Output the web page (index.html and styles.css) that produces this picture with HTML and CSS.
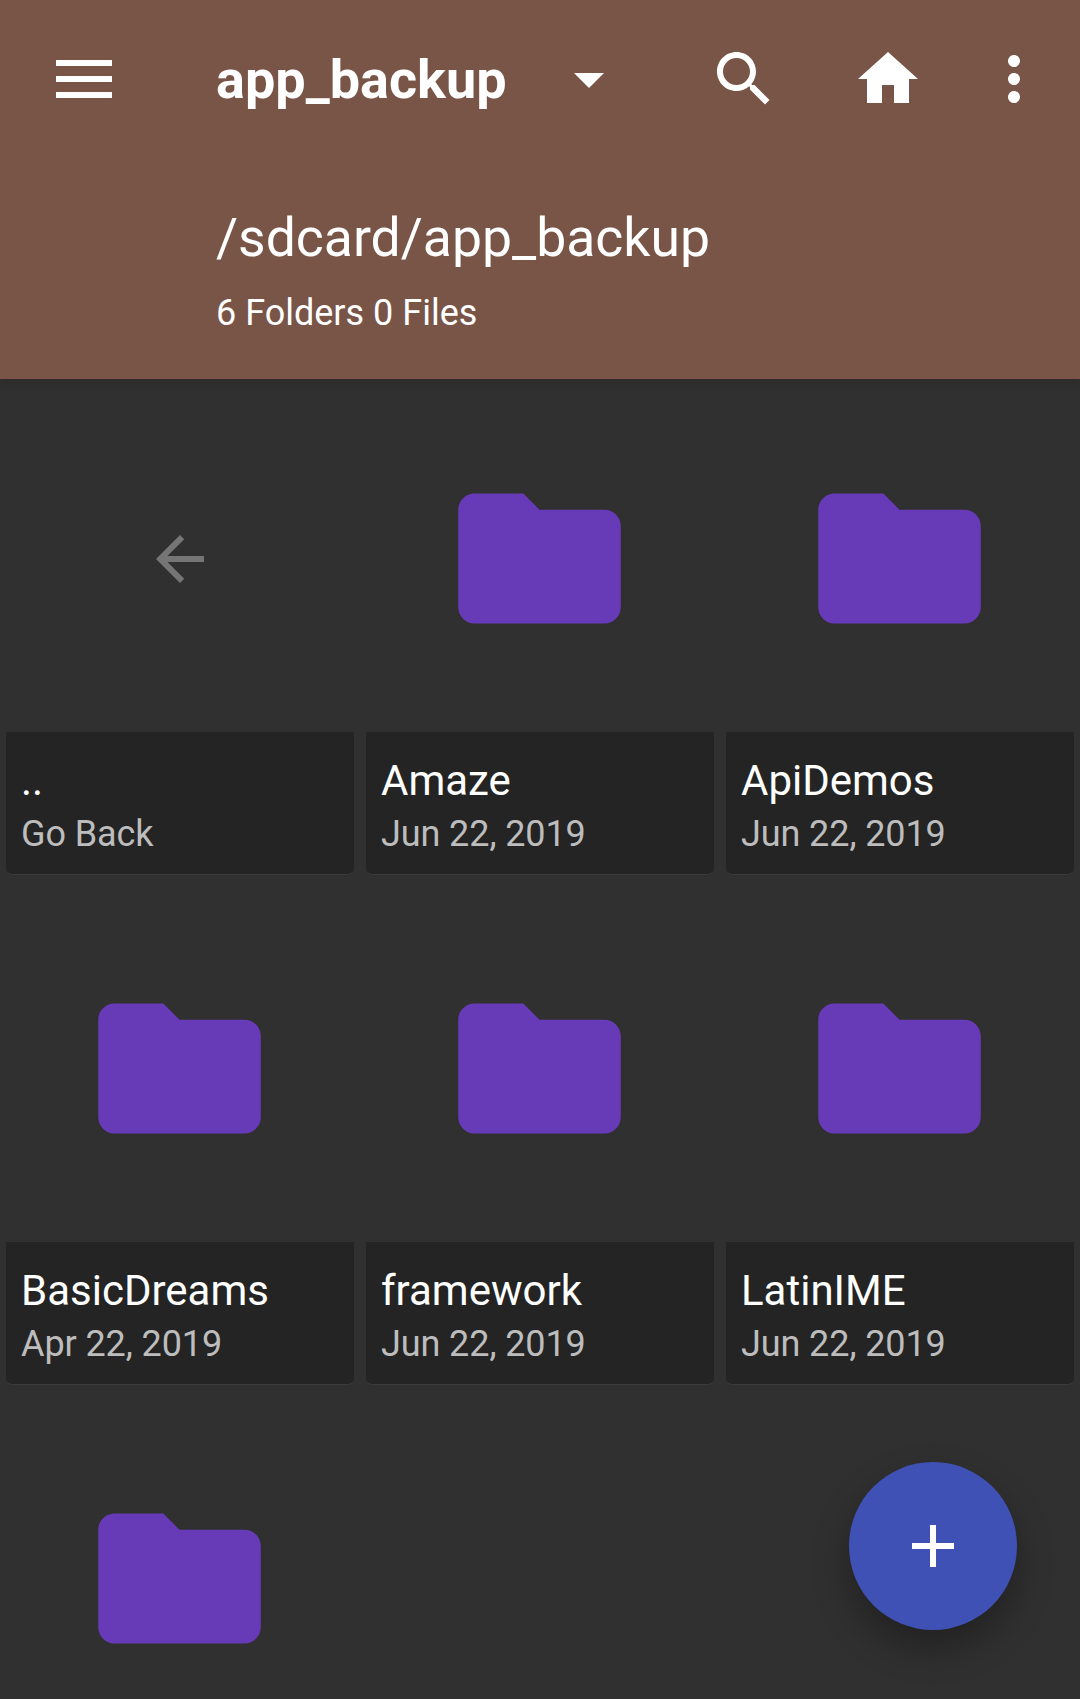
FILE: index.html
```html
<!DOCTYPE html>
<html>
    <head>
        <meta charset="utf-8">
        <title>app_backup</title>
        <link rel="stylesheet" href="styles.css">
    </head>
    <body>
        <svg class="defs" width="0" height="0">
            <symbol id="folder" viewBox="0 0 24 24"><path d="M10 4H4c-1.1 0-2 .9-2 2v12c0 1.1.9 2 2 2h16c1.1 0 2-.9 2-2V8c0-1.1-.9-2-2-2h-8l-2-2z"/></symbol>
        </svg>
        <div id="app">
            <header id="header">
                <div id="toolbar">
                    <svg class="icon" viewBox="0 0 72 72"><path d="M9 17h56v6H9zM9 33h56v6H9zM9 49h56v6H9z"/></svg>
                    <div id="title">app_backup</div>
                    <svg class="icon" id="dropdown" viewBox="0 0 24 24"><path d="M7 10l5 5 5-5z"/></svg>
                    <svg class="icon" id="search" viewBox="0 0 24 24"><path d="M15.5 14h-.79l-.28-.27C15.41 12.59 16 11.11 16 9.5 16 5.91 13.09 3 9.5 3S3 5.91 3 9.5 5.91 16 9.5 16c1.61 0 3.09-.59 4.23-1.57l.27.28v.79l5 4.99L20.49 19l-4.99-5zm-6 0C7.01 14 5 11.99 5 9.5S7.01 5 9.5 5 14 7.01 14 9.5 11.99 14 9.5 14z"/></svg>
                    <svg class="icon" id="home" viewBox="0 0 24 24"><path d="M10 20v-6h4v6h5v-8h3L12 3 2 12h3v8z"/></svg>
                    <svg class="icon" id="more" viewBox="0 0 24 24"><path d="M12 8c1.1 0 2-.9 2-2s-.9-2-2-2-2 .9-2 2 .9 2 2 2zm0 2c-1.1 0-2 .9-2 2s.9 2 2 2 2-.9 2-2-.9-2-2-2zm0 6c-1.1 0-2 .9-2 2s.9 2 2 2 2-.9 2-2-.9-2-2-2z"/></svg>
                </div>
                <div id="path">/sdcard/app_backup</div>
                <div id="count">6 Folders 0 Files</div>
            </header>
            <main id="grid">
                <div class="tile">
                    <div class="thumb"><svg class="back" viewBox="0 0 24 24"><path d="M20 11H7.83l5.59-5.59L12 4l-8 8 8 8 1.41-1.41L7.83 13H20v-2z"/></svg></div>
                    <div class="card"><div class="name">..</div><div class="date">Go Back</div></div>
                </div>
                <div class="tile">
                    <div class="thumb"><svg class="folder"><use href="#folder"/></svg></div>
                    <div class="card"><div class="name">Amaze</div><div class="date">Jun 22, 2019</div></div>
                </div>
                <div class="tile">
                    <div class="thumb"><svg class="folder"><use href="#folder"/></svg></div>
                    <div class="card"><div class="name">ApiDemos</div><div class="date">Jun 22, 2019</div></div>
                </div>
                <div class="tile">
                    <div class="thumb"><svg class="folder"><use href="#folder"/></svg></div>
                    <div class="card"><div class="name">BasicDreams</div><div class="date">Apr 22, 2019</div></div>
                </div>
                <div class="tile">
                    <div class="thumb"><svg class="folder"><use href="#folder"/></svg></div>
                    <div class="card"><div class="name">framework</div><div class="date">Jun 22, 2019</div></div>
                </div>
                <div class="tile">
                    <div class="thumb"><svg class="folder"><use href="#folder"/></svg></div>
                    <div class="card"><div class="name">LatinIME</div><div class="date">Jun 22, 2019</div></div>
                </div>
                <div class="tile">
                    <div class="thumb"><svg class="folder"><use href="#folder"/></svg></div>
                </div>
            </main>
            <div id="fab"><svg class="icon" viewBox="0 0 24 24"><path d="M19 13h-6v6h-2v-6H5v-2h6V5h2v6h6v2z"/></svg></div>
        </div>
    </body>
</html>
```

FILE: styles.css
```css
html, body {
    margin: 0;
    padding: 0;
    background-color: #303030;
    font-family: Roboto, sans-serif;
}
.defs {
    position: absolute;
}
#app {
    position: relative;
    width: 1080px;
    height: 1699px;
    overflow: hidden;
}
.icon {
    width: 72px;
    height: 72px;
    flex-shrink: 0;
    fill: white;
}
#header {
    height: 379px;
    box-sizing: border-box;
    padding-top: 43px;
    background-color: #795548;
    color: white;
    box-shadow: 0 3px 10px rgba(0,0,0,.12);
}
#toolbar {
    display: flex;
    align-items: center;
    padding-left: 47px;
}
#title {
    margin-left: 97px;
    width: 289px;
    font-size: 54px;
    font-weight: 700;
    white-space: nowrap;
}
#dropdown {
    margin-left: 48px;
}
#search {
    margin-left: 83px;
}
#home {
    margin-left: 72px;
}
#more {
    margin-left: 54px;
}
#path {
    margin: 90px 0 0 216px;
    font-size: 53.5px;
    line-height: 66px;
}
#count {
    margin: 22px 0 0 216px;
    font-size: 36px;
    line-height: 40px;
}
#grid {
    display: grid;
    grid-template-columns: repeat(3, 348px);
    gap: 19px 12px;
    padding: 5px 6px 0;
}
.thumb {
    display: flex;
    justify-content: center;
    align-items: center;
    height: 348px;
}
.folder {
    width: 195px;
    height: 195px;
    margin-right: 1px;
    fill: #673AB7;
}
.back {
    width: 72px;
    height: 72px;
    margin-top: 2px;
    fill: #757575;
}
.card {
    height: 143px;
    box-sizing: border-box;
    padding: 24px 15px 0;
    background-color: #242424;
    border-bottom: 1px solid #3a3a3a;
    border-radius: 0 0 6px 6px;
}
.name {
    font-size: 42px;
    line-height: 50px;
    color: white;
}
.date {
    margin-top: 3px;
    font-size: 36px;
    line-height: 50px;
    letter-spacing: -.1px;
    color: #bdbdbd;
}
#fab {
    position: absolute;
    left: 849px;
    top: 1462px;
    width: 168px;
    height: 168px;
    display: flex;
    justify-content: center;
    align-items: center;
    border-radius: 50%;
    background-color: #3F51B5;
    box-shadow: 0 18px 36px rgba(0,0,0,.3);
}
```
